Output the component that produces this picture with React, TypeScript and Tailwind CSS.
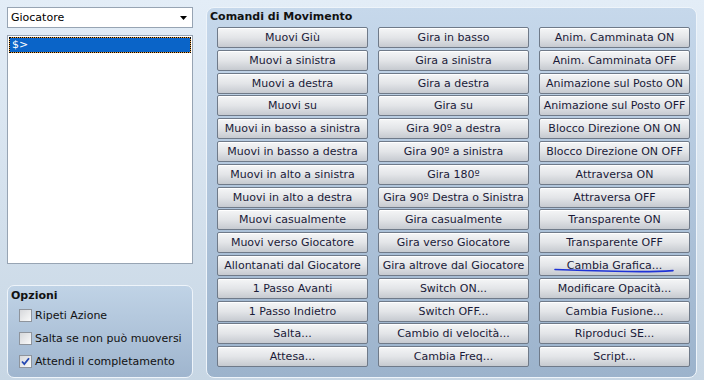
import React from "react";

const col1 = [
  "Muovi Giù",
  "Muovi a sinistra",
  "Muovi a destra",
  "Muovi su",
  "Muovi in basso a sinistra",
  "Muovi in basso a destra",
  "Muovi in alto a sinistra",
  "Muovi in alto a destra",
  "Muovi casualmente",
  "Muovi verso Giocatore",
  "Allontanati dal Giocatore",
  "1 Passo Avanti",
  "1 Passo Indietro",
  "Salta...",
  "Attesa...",
];
const col2 = [
  "Gira in basso",
  "Gira a sinistra",
  "Gira a destra",
  "Gira su",
  "Gira 90º a destra",
  "Gira 90º a sinistra",
  "Gira 180º",
  "Gira 90º Destra o Sinistra",
  "Gira casualmente",
  "Gira verso Giocatore",
  "Gira altrove dal Giocatore",
  "Switch ON...",
  "Switch OFF...",
  "Cambio di velocità...",
  "Cambia Freq...",
];
const col3 = [
  "Anim. Camminata ON",
  "Anim. Camminata OFF",
  "Animazione sul Posto ON",
  "Animazione sul Posto OFF",
  "Blocco Direzione ON ON",
  "Blocco Direzione ON OFF",
  "Attraversa ON",
  "Attraversa OFF",
  "Transparente ON",
  "Transparente OFF",
  "Cambia Grafica...",
  "Modificare Opacità...",
  "Cambia Fusione...",
  "Riproduci SE...",
  "Script...",
];

function Btn({ label }: { label: string }) {
  return (
    <button className="flex items-center justify-center whitespace-nowrap rounded-[2px] border border-[#6f7a89] bg-gradient-to-b from-[#f5f6f7] via-[#e3e5e8] to-[#c6cad0] text-[11px] leading-[13px] text-[#1a1a38] shadow-[inset_0_1px_0_#ffffff]">
      {label}
    </button>
  );
}

function Check({ label, checked }: { label: string; checked?: boolean }) {
  return (
    <div className="flex h-[23px] items-center">
      <div className="ml-[11px] flex h-[13px] w-[13px] items-center justify-center border border-[#8e949c] bg-gradient-to-br from-[#d6d8db] to-[#fafafa]">
        {checked && (
          <svg width="9" height="9" viewBox="0 0 9 9">
            <path d="M1 4.5 L3.3 7 L8 1.2" fill="none" stroke="#2447b2" strokeWidth="1.8" />
          </svg>
        )}
      </div>
      <span className="ml-[3px] text-[11px] leading-[14px] text-[#111]">{label}</span>
    </div>
  );
}

export default function App() {
  return (
    <div className="relative flex h-[380px] w-[704px] overflow-hidden bg-gradient-to-b from-[#e3edf7] to-[#c7d6e4] pl-[7px] pt-[7px] font-['DejaVu_Sans',sans-serif] text-[11px] text-black">
      {/* left column */}
      <div className="flex w-[186px] flex-col">
        <div className="flex h-[21px] items-center justify-between border border-[#97a4b3] bg-white pl-[3px] pr-[5px]">
          <span className="leading-[14px]">Giocatore</span>
          <svg width="7" height="4" viewBox="0 0 7 4">
            <path d="M0 0 L7 0 L3.5 4 Z" fill="#000" />
          </svg>
        </div>
        <div className="mt-[7px] h-[229px] border border-[#97a4b3] bg-white p-[1px]">
          <div className="h-[16px] border border-dotted border-black bg-[#e8a040]">
            <div className="h-full bg-[#0a64c8] pl-[2px] text-[11px] leading-[14px] text-white">$&gt;</div>
          </div>
        </div>
        <div className="mt-[21px] h-[93px] rounded-[7px] border border-[#eef4fa] bg-gradient-to-b from-[#c0d3e6] to-[#9fb5ce] pt-[3px]">
          <div className="pl-[3px] text-[11px] font-bold leading-[14px] text-[#111]">Opzioni</div>
          <div className="mt-[1px]">
            <Check label="Ripeti Azione" />
            <Check label="Salta se non può muoversi" />
            <Check label="Attendi il completamento" checked />
          </div>
        </div>
      </div>

      {/* right panel */}
      <div className="ml-[13px] h-[371px] w-[491px] rounded-[8px] border border-[#eef4fa] bg-gradient-to-b from-[#c6d8eb] to-[#9cb3cc] pl-[10px] pr-[6px] pt-[2px]">
        <div className="-ml-[7px] text-[11px] font-bold leading-[14px] text-[#111]">Comandi di Movimento</div>
        <div className="mt-[3px] grid grid-flow-col grid-cols-[repeat(3,151px)] grid-rows-[repeat(15,21px)] gap-x-[10px] gap-y-[1.8px]">
          {col1.map((l) => (
            <Btn key={"a" + l} label={l} />
          ))}
          {col2.map((l) => (
            <Btn key={"b" + l} label={l} />
          ))}
          {col3.map((l) => (
            <Btn key={"c" + l} label={l} />
          ))}
        </div>
      </div>

      {/* hand-drawn annotation */}
      <svg className="pointer-events-none absolute left-0 top-0" width="704" height="380" viewBox="0 0 704 380">
        <path d="M555 269.5 Q585 270.5 615 271.2 Q650 272.2 673 270.6" fill="none" stroke="#1f33d6" strokeWidth="1.6" strokeLinecap="round" />
      </svg>
    </div>
  );
}
